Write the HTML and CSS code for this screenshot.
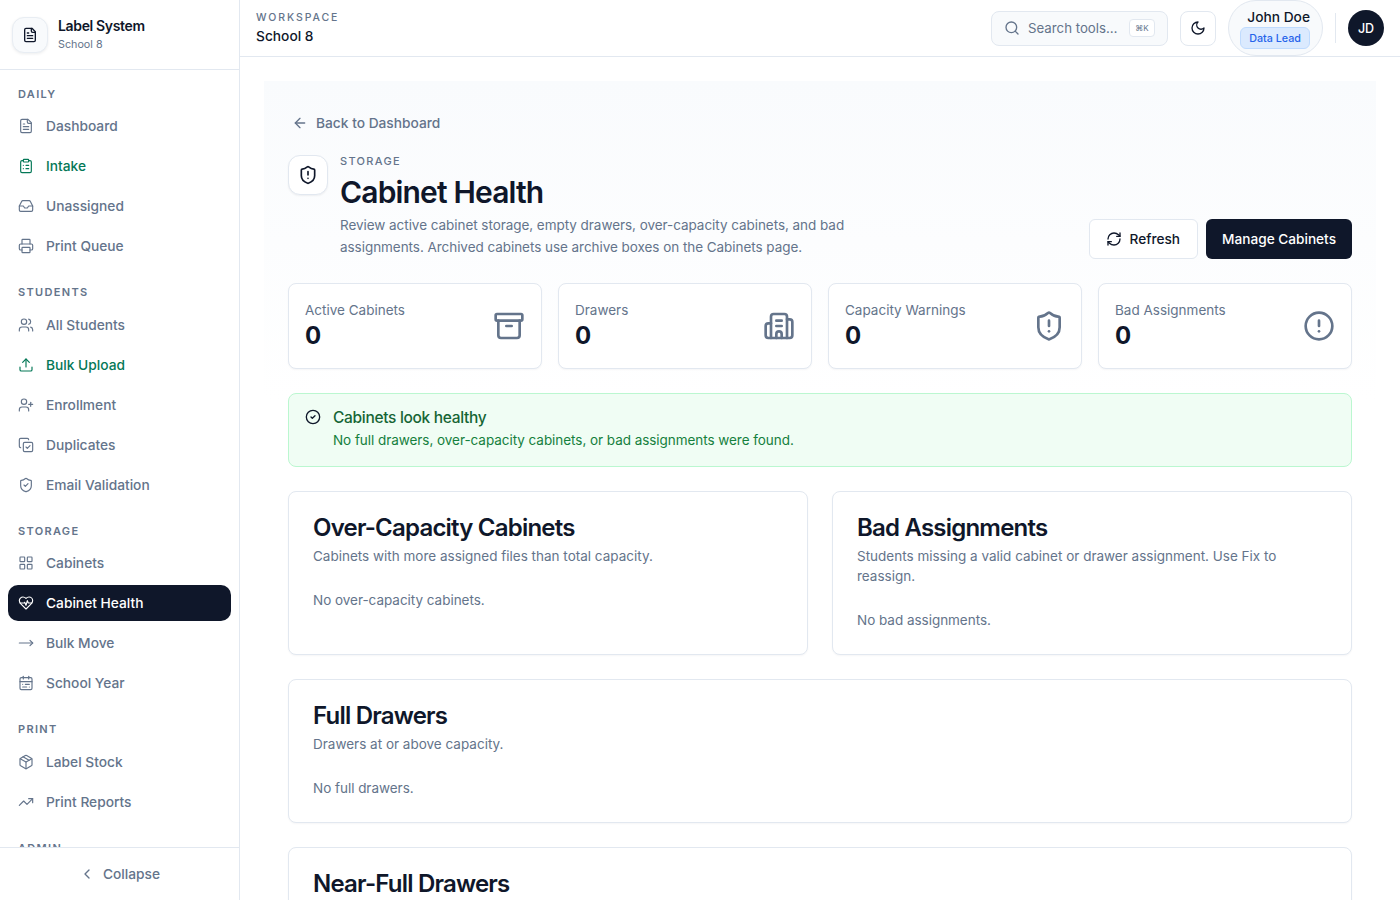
FILE: index.html
```html
<!DOCTYPE html>
<html lang="en">
<head>
<meta charset="utf-8">
<title>Cabinet Health</title>
<link rel="stylesheet" href="styles.css">
</head>
<body>
<svg class="sprite" aria-hidden="true">
  <symbol id="i-file" viewBox="0 0 24 24"><path d="M15 2H6a2 2 0 0 0-2 2v16a2 2 0 0 0 2 2h12a2 2 0 0 0 2-2V7Z"/><path d="M14 2v4a2 2 0 0 0 2 2h4"/><path d="M10 9H8"/><path d="M16 13H8"/><path d="M16 17H8"/></symbol>
  <symbol id="i-clipboard" viewBox="0 0 24 24"><rect x="8" y="2" width="8" height="4" rx="1"/><path d="M16 4h2a2 2 0 0 1 2 2v14a2 2 0 0 1-2 2H6a2 2 0 0 1-2-2V6a2 2 0 0 1 2-2h2"/><path d="M12 11h4"/><path d="M12 16h4"/><path d="M8 11h.01"/><path d="M8 16h.01"/></symbol>
  <symbol id="i-inbox" viewBox="0 0 24 24"><polyline points="22 12 16 12 14 15 10 15 8 12 2 12"/><path d="M5.45 5.11 2 12v6a2 2 0 0 0 2 2h16a2 2 0 0 0 2-2v-6l-3.45-6.89A2 2 0 0 0 16.76 4H7.24a2 2 0 0 0-1.79 1.11z"/></symbol>
  <symbol id="i-printer" viewBox="0 0 24 24"><path d="M6 18H4a2 2 0 0 1-2-2v-5a2 2 0 0 1 2-2h16a2 2 0 0 1 2 2v5a2 2 0 0 1-2 2h-2"/><path d="M6 9V3a1 1 0 0 1 1-1h10a1 1 0 0 1 1 1v6"/><rect x="6" y="14" width="12" height="8" rx="1"/></symbol>
  <symbol id="i-users" viewBox="0 0 24 24"><path d="M16 21v-2a4 4 0 0 0-4-4H6a4 4 0 0 0-4 4v2"/><circle cx="9" cy="7" r="4"/><path d="M22 21v-2a4 4 0 0 0-3-3.87"/><path d="M16 3.13a4 4 0 0 1 0 7.75"/></symbol>
  <symbol id="i-upload" viewBox="0 0 24 24"><path d="M12 3v12"/><path d="m17 8-5-5-5 5"/><path d="M21 15v4a2 2 0 0 1-2 2H5a2 2 0 0 1-2-2v-4"/></symbol>
  <symbol id="i-userplus" viewBox="0 0 24 24"><path d="M16 21v-2a4 4 0 0 0-4-4H6a4 4 0 0 0-4 4v2"/><circle cx="9" cy="7" r="4"/><path d="M19 8v6"/><path d="M22 11h-6"/></symbol>
  <symbol id="i-copycheck" viewBox="0 0 24 24"><path d="m12 15 2 2 4-4"/><rect x="8" y="8" width="14" height="14" rx="2"/><path d="M4 16c-1.1 0-2-.9-2-2V4c0-1.1.9-2 2-2h10c1.1 0 2 .9 2 2"/></symbol>
  <symbol id="i-shieldcheck" viewBox="0 0 24 24"><path d="M20 13c0 5-3.5 7.5-7.66 8.95a1 1 0 0 1-.67-.01C7.5 20.5 4 18 4 13V6a1 1 0 0 1 1-1c2 0 4.5-1.2 6.24-2.72a1.17 1.17 0 0 1 1.52 0C14.51 3.81 17 5 19 5a1 1 0 0 1 1 1z"/><path d="m9 12 2 2 4-4"/></symbol>
  <symbol id="i-grid" viewBox="0 0 24 24"><rect x="3" y="3" width="7" height="7" rx="1"/><rect x="14" y="3" width="7" height="7" rx="1"/><rect x="14" y="14" width="7" height="7" rx="1"/><rect x="3" y="14" width="7" height="7" rx="1"/></symbol>
  <symbol id="i-heartpulse" viewBox="0 0 24 24"><path d="M19 14c1.49-1.46 3-3.21 3-5.5A5.5 5.5 0 0 0 16.5 3c-1.76 0-3 .5-4.5 2-1.5-1.5-2.74-2-4.5-2A5.5 5.5 0 0 0 2 8.5c0 2.3 1.5 4.05 3 5.5l7 7Z"/><path d="M3.22 12H9.5l.5-1 2 4.5 2-7 1.5 3.5h5.27"/></symbol>
  <symbol id="i-moveright" viewBox="0 0 24 24"><path d="M18 8l4 4-4 4"/><path d="M2 12h20"/></symbol>
  <symbol id="i-calendar" viewBox="0 0 24 24"><rect x="3" y="4" width="18" height="18" rx="2"/><path d="M16 2v4"/><path d="M3 10h18"/><path d="M8 2v4"/><path d="M17 14h-6"/><path d="M13 18H7"/><path d="M7 14h.01"/><path d="M17 18h.01"/></symbol>
  <symbol id="i-package" viewBox="0 0 24 24"><path d="M11 21.73a2 2 0 0 0 2 0l7-4A2 2 0 0 0 21 16V8a2 2 0 0 0-1-1.73l-7-4a2 2 0 0 0-2 0l-7 4A2 2 0 0 0 3 8v8a2 2 0 0 0 1 1.73z"/><path d="M12 22V12"/><polyline points="3.29 7 12 12 20.71 7"/><path d="m7.5 4.27 9 5.15"/></symbol>
  <symbol id="i-trending" viewBox="0 0 24 24"><polyline points="22 7 13.5 15.5 8.5 10.5 2 17"/><polyline points="16 7 22 7 22 13"/></symbol>
  <symbol id="i-chevron" viewBox="0 0 24 24"><path d="m15 18-6-6 6-6"/></symbol>
  <symbol id="i-search" viewBox="0 0 24 24"><circle cx="11" cy="11" r="8"/><path d="m21 21-4.3-4.3"/></symbol>
  <symbol id="i-moon" viewBox="0 0 24 24"><path d="M12 3a6 6 0 0 0 9 9 9 9 0 1 1-9-9Z"/></symbol>
  <symbol id="i-arrowleft" viewBox="0 0 24 24"><path d="m12 19-7-7 7-7"/><path d="M19 12H5"/></symbol>
  <symbol id="i-shieldalert" viewBox="0 0 24 24"><path d="M20 13c0 5-3.5 7.5-7.66 8.95a1 1 0 0 1-.67-.01C7.5 20.5 4 18 4 13V6a1 1 0 0 1 1-1c2 0 4.5-1.2 6.24-2.72a1.17 1.17 0 0 1 1.52 0C14.51 3.81 17 5 19 5a1 1 0 0 1 1 1z"/><path d="M12 8v4"/><path d="M12 16h.01"/></symbol>
  <symbol id="i-refresh" viewBox="0 0 24 24"><path d="M3 12a9 9 0 0 1 9-9 9.75 9.75 0 0 1 6.74 2.74L21 8"/><path d="M21 3v5h-5"/><path d="M21 12a9 9 0 0 1-9 9 9.75 9.75 0 0 1-6.74-2.74L3 16"/><path d="M8 16H3v5"/></symbol>
  <symbol id="i-archive" viewBox="0 0 24 24"><rect x="2" y="3" width="20" height="5" rx="1"/><path d="M4 8v11a2 2 0 0 0 2 2h12a2 2 0 0 0 2-2V8"/><path d="M10 12h4"/></symbol>
  <symbol id="i-building" viewBox="0 0 24 24"><path d="M10 12h4"/><path d="M10 8h4"/><path d="M14 21v-3a2 2 0 0 0-4 0v3"/><path d="M6 10H4a2 2 0 0 0-2 2v7a2 2 0 0 0 2 2h16a2 2 0 0 0 2-2V9a2 2 0 0 0-2-2h-2"/><path d="M6 21V5a2 2 0 0 1 2-2h8a2 2 0 0 1 2 2v16"/></symbol>
  <symbol id="i-circlealert" viewBox="0 0 24 24"><circle cx="12" cy="12" r="10"/><path d="M12 8v4"/><path d="M12 16h.01"/></symbol>
  <symbol id="i-circlecheck" viewBox="0 0 24 24"><circle cx="12" cy="12" r="10"/><path d="m9 12 2 2 4-4"/></symbol>
</svg>

<aside class="sidebar">
  <div class="brand">
    <div class="brand-logo"><svg class="icon icon-16"><use href="#i-file"/></svg></div>
    <div class="brand-text">
      <div class="brand-name">Label System</div>
      <div class="brand-sub">School 8</div>
    </div>
  </div>
  <nav class="nav">
    <div class="nav-label">DAILY</div>
    <a class="nav-item"><svg class="icon icon-16"><use href="#i-file"/></svg>Dashboard</a>
    <a class="nav-item green"><svg class="icon icon-16"><use href="#i-clipboard"/></svg>Intake</a>
    <a class="nav-item"><svg class="icon icon-16"><use href="#i-inbox"/></svg>Unassigned</a>
    <a class="nav-item"><svg class="icon icon-16"><use href="#i-printer"/></svg>Print Queue</a>
    <div class="nav-label">STUDENTS</div>
    <a class="nav-item"><svg class="icon icon-16"><use href="#i-users"/></svg>All Students</a>
    <a class="nav-item green"><svg class="icon icon-16"><use href="#i-upload"/></svg>Bulk Upload</a>
    <a class="nav-item"><svg class="icon icon-16"><use href="#i-userplus"/></svg>Enrollment</a>
    <a class="nav-item"><svg class="icon icon-16"><use href="#i-copycheck"/></svg>Duplicates</a>
    <a class="nav-item"><svg class="icon icon-16"><use href="#i-shieldcheck"/></svg>Email Validation</a>
    <div class="nav-label">STORAGE</div>
    <a class="nav-item"><svg class="icon icon-16"><use href="#i-grid"/></svg>Cabinets</a>
    <a class="nav-item active"><svg class="icon icon-16"><use href="#i-heartpulse"/></svg>Cabinet Health</a>
    <a class="nav-item"><svg class="icon icon-16"><use href="#i-moveright"/></svg>Bulk Move</a>
    <a class="nav-item"><svg class="icon icon-16"><use href="#i-calendar"/></svg>School Year</a>
    <div class="nav-label">PRINT</div>
    <a class="nav-item"><svg class="icon icon-16"><use href="#i-package"/></svg>Label Stock</a>
    <a class="nav-item"><svg class="icon icon-16"><use href="#i-trending"/></svg>Print Reports</a>
    <div class="nav-label">ADMIN</div>
  </nav>
  <div class="collapse"><svg class="icon icon-16"><use href="#i-chevron"/></svg><span>Collapse</span></div>
</aside>

<div class="shell">
  <header class="topbar">
    <div class="workspace">
      <div class="workspace-label">WORKSPACE</div>
      <div class="workspace-name">School 8</div>
    </div>
    <div class="top-actions">
      <div class="search"><svg class="icon icon-16"><use href="#i-search"/></svg><span class="search-text">Search tools…</span><kbd class="kbd">⌘K</kbd></div>
      <button class="theme-btn"><svg class="icon icon-16"><use href="#i-moon"/></svg></button>
      <div class="user-pill">
        <div class="user-name">John Doe</div>
        <div class="user-role">Data Lead</div>
      </div>
      <div class="divider"></div>
      <div class="avatar">JD</div>
    </div>
  </header>

  <main class="main">
    <div class="page">
      <a class="back"><svg class="icon icon-16"><use href="#i-arrowleft"/></svg>Back to Dashboard</a>
      <section class="hero">
        <div class="hero-icon"><svg class="icon icon-20"><use href="#i-shieldalert"/></svg></div>
        <div class="hero-text">
          <div class="eyebrow">STORAGE</div>
          <h1 class="title">Cabinet Health</h1>
          <p class="lede">Review active cabinet storage, empty drawers, over-capacity cabinets, and bad assignments. Archived cabinets use archive boxes on the Cabinets page.</p>
        </div>
        <div class="hero-actions">
          <button class="btn btn-light"><svg class="icon icon-16"><use href="#i-refresh"/></svg>Refresh</button>
          <button class="btn btn-dark">Manage Cabinets</button>
        </div>
      </section>

      <section class="stats">
        <div class="stat"><div><div class="stat-label">Active Cabinets</div><div class="stat-value">0</div></div><svg class="icon icon-32"><use href="#i-archive"/></svg></div>
        <div class="stat"><div><div class="stat-label">Drawers</div><div class="stat-value">0</div></div><svg class="icon icon-32"><use href="#i-building"/></svg></div>
        <div class="stat"><div><div class="stat-label">Capacity Warnings</div><div class="stat-value">0</div></div><svg class="icon icon-32"><use href="#i-shieldalert"/></svg></div>
        <div class="stat"><div><div class="stat-label">Bad Assignments</div><div class="stat-value">0</div></div><svg class="icon icon-32"><use href="#i-circlealert"/></svg></div>
      </section>

      <section class="banner">
        <svg class="icon icon-16 banner-icon"><use href="#i-circlecheck"/></svg>
        <div>
          <div class="banner-title">Cabinets look healthy</div>
          <div class="banner-text">No full drawers, over-capacity cabinets, or bad assignments were found.</div>
        </div>
      </section>

      <section class="two-col">
        <div class="card">
          <h2 class="card-title">Over-Capacity Cabinets</h2>
          <p class="card-desc">Cabinets with more assigned files than total capacity.</p>
          <p class="card-empty">No over-capacity cabinets.</p>
        </div>
        <div class="card">
          <h2 class="card-title">Bad Assignments</h2>
          <p class="card-desc">Students missing a valid cabinet or drawer assignment. Use Fix to reassign.</p>
          <p class="card-empty">No bad assignments.</p>
        </div>
      </section>

      <section class="card">
        <h2 class="card-title">Full Drawers</h2>
        <p class="card-desc">Drawers at or above capacity.</p>
        <p class="card-empty">No full drawers.</p>
      </section>

      <section class="card">
        <h2 class="card-title">Near-Full Drawers</h2>
      </section>
    </div>
  </main>
</div>
</body>
</html>
```

FILE: styles.css
```css
* { box-sizing: border-box; }
html, body { height: 100%; }
body {
  margin: 0;
  display: flex;
  height: 900px;
  overflow: hidden;
  background: #fff;
  color: #0f172a;
  font-family: Inter, "Liberation Sans", sans-serif;
  font-size: 14px;
}
.sprite { display: none; }
.icon {
  flex: none;
  fill: none;
  stroke: currentColor;
  stroke-width: 2;
  stroke-linecap: round;
  stroke-linejoin: round;
}
.icon-16 { width: 16px; height: 16px; }
.icon-20 { width: 20px; height: 20px; }
.icon-32 { width: 32px; height: 32px; }

/* Sidebar */
.sidebar {
  flex: none;
  width: 240px;
  height: 900px;
  display: flex;
  flex-direction: column;
  border-right: 1px solid #e2e8f0;
  background: #fff;
}
.brand {
  flex: none;
  height: 70px;
  display: flex;
  align-items: center;
  gap: 10px;
  padding: 0 12px;
  border-bottom: 1px solid #e2e8f0;
}
.brand-logo {
  width: 36px;
  height: 36px;
  display: flex;
  align-items: center;
  justify-content: center;
  border: 1px solid #e8edf3;
  border-radius: 12px;
  background: #f8fafc;
  box-shadow: 0 1px 3px rgba(15, 23, 42, .08);
}
.brand-text { padding-bottom: 1px; }
.brand-name { font-size: 14px; font-weight: 600; line-height: 20px; letter-spacing: -.025em; }
.brand-sub { font-size: 10.75px; line-height: 17px; color: #64748b; }
.nav {
  flex: 1;
  min-height: 0;
  overflow: hidden;
  padding: 16px 8px 0;
  display: flex;
  flex-direction: column;
  gap: 4px;
}
.nav-label {
  flex: none;
  height: 16px;
  margin: 0 0 2.4px 10px;
  font-size: 11px;
  line-height: 16px;
  font-weight: 600;
  letter-spacing: .12em;
  color: #64748b;
}
.nav-item + .nav-label { margin-top: 16px; }
.nav-item {
  flex: none;
  height: 36px;
  display: flex;
  align-items: center;
  gap: 12px;
  padding: 0 10px;
  border-radius: 10px;
  font-size: 13.75px;
  font-weight: 450;
  color: #64748b;
}
.nav-item .icon { stroke-width: 1.75; }
.nav-item.green { color: #047857; }
.nav-item.active { background: #0f172a; color: #fff; }
.collapse {
  flex: none;
  height: 53px;
  display: flex;
  align-items: center;
  justify-content: center;
  gap: 8px;
  border-top: 1px solid #e2e8f0;
  font-size: 13.75px;
  font-weight: 450;
  color: #64748b;
}

/* Top bar */
.shell { flex: 1; min-width: 0; display: flex; flex-direction: column; }
.topbar {
  flex: none;
  height: 57px;
  display: flex;
  align-items: center;
  justify-content: space-between;
  padding: 0 16px;
  border-bottom: 1px solid #e2e8f0;
  background: #fff;
}
.workspace-label { margin-top: 1px; font-size: 10.5px; line-height: 14px; font-weight: 500; letter-spacing: .18em; color: #64748b; }
.workspace-name { margin-top: 1px; font-size: 13.75px; line-height: 20px; font-weight: 500; }
.top-actions { display: flex; align-items: center; gap: 12px; }
.search {
  width: 177px;
  height: 35px;
  display: flex;
  align-items: center;
  gap: 8px;
  padding: 0 12px;
  border: 1px solid #e2e8f0;
  border-radius: 8px;
  background: #f8fafc;
  color: #64748b;
}
.search-text { flex: 1; padding-bottom: 1px; font-size: 13.25px; white-space: nowrap; }
.kbd {
  width: 26px;
  height: 18px;
  display: flex;
  align-items: center;
  justify-content: center;
  border: 1px solid #e2e8f0;
  border-radius: 4px;
  background: #fff;
  font-family: Inter, "DejaVu Sans", sans-serif;
  font-size: 8px;
  color: #64748b;
}
.theme-btn {
  width: 36px;
  height: 35px;
  display: flex;
  align-items: center;
  justify-content: center;
  padding: 0;
  border: 1px solid #e2e8f0;
  border-radius: 8px;
  background: #fff;
  color: #0f172a;
}
.user-pill {
  width: 95px;
  height: 56px;
  display: flex;
  flex-direction: column;
  align-items: flex-end;
  justify-content: center;
  padding: 0 12px;
  border: 1px solid #e2e8f0;
  border-radius: 28px;
  background: #f8fafc;
}
.user-name { font-size: 13.75px; line-height: 20px; font-weight: 500; }
.user-role {
  height: 22px;
  padding: 1px 8px 0;
  border: 1px solid #bfdbfe;
  border-radius: 6px;
  background: #dbeafe;
  font-size: 10.75px;
  line-height: 20px;
  font-weight: 450;
  white-space: nowrap;
  color: #2563eb;
}
.divider { width: 1px; height: 30px; background: #e2e8f0; }
.avatar {
  width: 36px;
  height: 36px;
  display: flex;
  align-items: center;
  justify-content: center;
  border-radius: 50%;
  background: #0f172a;
  color: #fff;
  font-size: 12.5px;
  font-weight: 500;
}

/* Main */
.main { flex: 1; min-height: 0; overflow: hidden; padding: 24px; }
.page {
  padding: 32px 24px 24px;
  display: flex;
  flex-direction: column;
  gap: 24px;
  background: linear-gradient(#f9fbfd, #fff 320px) no-repeat;
}
.back {
  display: flex;
  align-items: center;
  gap: 8px;
  margin: 0 0 -2px 4px;
  height: 20px;
  font-size: 13.75px;
  line-height: 20px;
  font-weight: 450;
  color: #64748b;
}
.hero { display: flex; align-items: flex-end; gap: 12px; }
.hero-icon {
  flex: none;
  align-self: flex-start;
  width: 40px;
  height: 40px;
  display: flex;
  align-items: center;
  justify-content: center;
  border: 1px solid #e2e8f0;
  border-radius: 12px;
  background: #fff;
  box-shadow: 0 1px 2px rgba(15, 23, 42, .06);
}
.hero-text { flex: 1; min-width: 0; padding-bottom: 1px; }
.eyebrow { font-size: 11px; line-height: 12px; font-weight: 500; letter-spacing: .12em; color: #64748b; }
.title { margin: 7px 0 0; font-size: 30px; line-height: 36px; font-weight: 600; letter-spacing: -.028em; color: #0f172a; }
.lede { margin: 4px 0 0; max-width: 560px; font-size: 13.5px; line-height: 22px; letter-spacing: -.05px; color: #64748b; }
.hero-actions { flex: none; display: flex; gap: 8px; }
.btn {
  height: 40px;
  display: flex;
  align-items: center;
  gap: 8px;
  padding: 0 16px;
  border: 1px solid #e2e8f0;
  border-radius: 6px;
  background: #fff;
  color: #0f172a;
  font-family: inherit;
  font-size: 13.65px;
  font-weight: 500;
}
.btn-light { padding-right: 17px; }
.btn-dark { border: 0; background: #0f172a; color: #fff; }

.stats { display: grid; grid-template-columns: repeat(4, 1fr); gap: 16px; }
.stat {
  height: 86px;
  display: flex;
  align-items: center;
  justify-content: space-between;
  padding: 0 16px;
  border: 1px solid #e2e8f0;
  border-radius: 8px;
  background: #fff;
  box-shadow: 0 1px 2px rgba(15, 23, 42, .04);
  color: #64748b;
}
.stat-label { font-size: 13.5px; line-height: 20px; color: #64748b; }
.stat-value { font-size: 24px; line-height: 32px; font-weight: 700; color: #0f172a; }

.banner {
  height: 74px;
  display: flex;
  align-items: flex-start;
  gap: 12px;
  padding: 13px 16px;
  border: 1px solid #bbf7d0;
  border-radius: 8px;
  background: #f0fdf4;
}
.banner-icon { margin-top: 2px; color: #0f172a; }
.banner-title { margin-top: 1px; font-size: 15.5px; line-height: 20px; font-weight: 500; letter-spacing: -.02em; color: #166534; }
.banner-text { margin-top: 2px; font-size: 13.5px; line-height: 20px; letter-spacing: -.05px; color: #15803d; }

.two-col { display: grid; grid-template-columns: 1fr 1fr; gap: 24px; }
.card {
  padding: 24px;
  border: 1px solid #e2e8f0;
  border-radius: 8px;
  background: #fff;
  box-shadow: 0 1px 2px rgba(15, 23, 42, .04);
}
.card-title { margin: 0; font-size: 24px; line-height: 24px; font-weight: 600; letter-spacing: -.033em; color: #0f172a; }
.card-desc { margin: 6px 0 0; font-size: 13.5px; line-height: 20px; color: #64748b; }
.card-empty { margin: 24px 0 0; font-size: 13.5px; line-height: 20px; letter-spacing: -.03px; color: #64748b; }
```
